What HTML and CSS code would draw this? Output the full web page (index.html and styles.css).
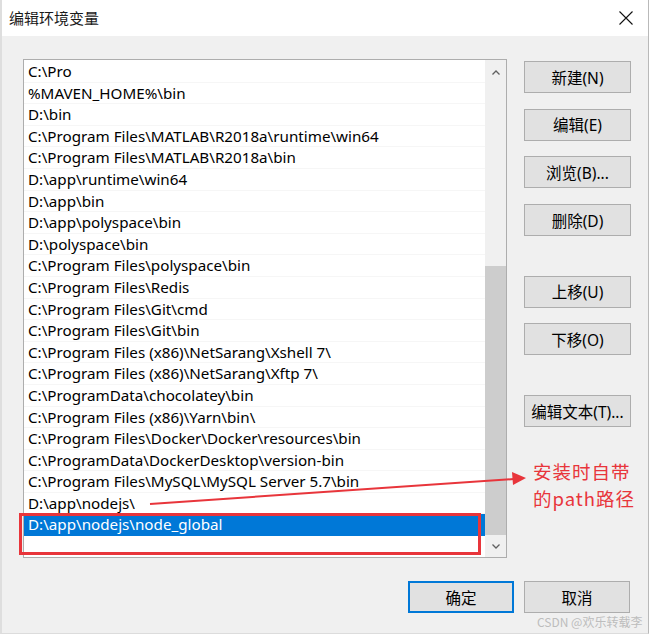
FILE: index.html
```html
<!DOCTYPE html>
<html lang="zh-CN">
<head>
<meta charset="utf-8">
<title>编辑环境变量</title>
<link rel="stylesheet" href="styles.css">
</head>
<body>
<div class="window">
  <div class="titlebar">
    <span class="title">编辑环境变量</span>
    <svg class="close" width="14" height="14" viewBox="0 0 14 14"><path d="M0.5 0.5 L13.5 13.5 M13.5 0.5 L0.5 13.5" stroke="#111" stroke-width="1.1" fill="none"/></svg>
  </div>
  <div class="content">
    <div class="main">
      <div class="listbox">
        <ul class="list">
          <li>C:\Pro</li>
          <li>%MAVEN_HOME%\bin</li>
          <li>D:\bin</li>
          <li>C:\Program Files\MATLAB\R2018a\runtime\win64</li>
          <li>C:\Program Files\MATLAB\R2018a\bin</li>
          <li>D:\app\runtime\win64</li>
          <li>D:\app\bin</li>
          <li>D:\app\polyspace\bin</li>
          <li>D:\polyspace\bin</li>
          <li>C:\Program Files\polyspace\bin</li>
          <li>C:\Program Files\Redis</li>
          <li>C:\Program Files\Git\cmd</li>
          <li>C:\Program Files\Git\bin</li>
          <li>C:\Program Files (x86)\NetSarang\Xshell 7\</li>
          <li>C:\Program Files (x86)\NetSarang\Xftp 7\</li>
          <li>C:\ProgramData\chocolatey\bin</li>
          <li>C:\Program Files (x86)\Yarn\bin\</li>
          <li>C:\Program Files\Docker\Docker\resources\bin</li>
          <li>C:\ProgramData\DockerDesktop\version-bin</li>
          <li>C:\Program Files\MySQL\MySQL Server 5.7\bin</li>
          <li>D:\app\nodejs\</li>
          <li class="selected"><span>D:\app\nodejs\node_global</span></li>
          <li class="empty"></li>
        </ul>
        <div class="scrollbar">
          <div class="arrow">
            <svg width="8" height="5" viewBox="0 0 8 5"><path d="M0.5 4.5 L4 1 L7.5 4.5" stroke="#606060" stroke-width="1.3" fill="none"/></svg>
          </div>
          <div class="track"><div class="thumb"></div></div>
          <div class="arrow bottom">
            <svg width="8" height="5" viewBox="0 0 8 5"><path d="M0.5 0.5 L4 4 L7.5 0.5" stroke="#606060" stroke-width="1.3" fill="none"/></svg>
          </div>
        </div>
      </div>
      <div class="side">
        <button class="btn">新建(N)</button>
        <button class="btn">编辑(E)</button>
        <button class="btn">浏览(B)...</button>
        <button class="btn">删除(D)</button>
        <button class="btn spaced">上移(U)</button>
        <button class="btn">下移(O)</button>
        <button class="btn spaced">编辑文本(T)...</button>
      </div>
    </div>
    <div class="footer">
      <button class="btn default">确定</button>
      <button class="btn">取消</button>
    </div>
  </div>
  <svg class="annotation" width="650" height="635" viewBox="0 0 650 635">
    <rect x="20.5" y="514.5" width="459" height="39" fill="none" stroke="#e8353b" stroke-width="3"/>
    <path d="M150 504 L514 479" stroke="#e8353b" stroke-width="2" fill="none"/>
    <path d="M526 478 L512 472 L513 485 Z" fill="#e8353b"/>
  </svg>
  <div class="note"><div>安装时自带</div><div>的path路径</div></div>
  <div class="watermark">CSDN @欢乐转载李</div>
</div>
</body>
</html>
```
FILE: styles.css
```css
html, body {
  margin: 0;
  padding: 0;
  background: #ffffff;
}
body {
  width: 650px;
  height: 635px;
  overflow: hidden;
  font-family: "Noto Sans", "Noto Sans CJK SC", sans-serif;
  color: #000;
}
.window {
  position: relative;
  width: 646px;
  height: 633px;
  border-left: 2px solid #dedede;
  border-right: 1px solid #b9b9b9;
  border-bottom: 1px solid #dcdcdc;
  background: #f0f0f0;
  display: flex;
  flex-direction: column;
}
.titlebar {
  height: 36px;
  background: #ffffff;
  display: flex;
  align-items: center;
  justify-content: space-between;
  padding: 0 15px 0 7px;
  flex: none;
}
.title {
  font-family: "Noto Sans CJK SC", sans-serif;
  font-size: 15px;
  color: #1a1a1a;
  margin-top: -1px;
}
.close {
  display: block;
  margin-top: -1px;
}
.content {
  flex: 1;
  display: flex;
  flex-direction: column;
  padding: 23px 0 0 21px;
}
.main {
  display: flex;
  gap: 17px;
}
.listbox {
  width: 484px;
  height: 499px;
  box-sizing: border-box;
  border: 1px solid #adadad;
  background: #ffffff;
  display: flex;
}
.list {
  list-style: none;
  margin: 0;
  padding: 1px 0 0 0;
  flex: 1;
  overflow: hidden;
}
.list li {
  height: 21.6px;
  line-height: 21.6px;
  box-sizing: border-box;
  padding-left: 4px;
  font-size: 15.2px;
  white-space: nowrap;
  color: #000;
  border-bottom: 1px solid #f6f6f6;
}
.list li.selected {
  background: #0078d7;
  color: #ffffff;
  border-bottom: none;
}
.list li.empty {
  border-bottom: none;
}
.scrollbar {
  width: 21px;
  background: #f0f0f0;
  display: flex;
  flex-direction: column;
  flex: none;
}
.arrow {
  height: 25px;
  display: flex;
  align-items: center;
  justify-content: center;
  flex: none;
}
.arrow.bottom {
  height: 22px;
}
.track {
  flex: 1;
  display: flex;
  flex-direction: column;
  justify-content: flex-end;
}
.thumb {
  height: 269px;
  background: #cdcdcd;
}
.side {
  display: flex;
  flex-direction: column;
  gap: 15.7px;
  padding-top: 2px;
}
.btn {
  width: 107px;
  height: 32px;
  box-sizing: border-box;
  border: 1px solid #adadad;
  background: #e1e1e1;
  font-family: "Noto Sans", "Noto Sans CJK SC", sans-serif;
  font-size: 15.5px;
  color: #000;
  padding: 0;
  margin: 0;
}
.btn.spaced {
  margin-top: 24px;
}
.footer {
  display: flex;
  justify-content: flex-end;
  gap: 10px;
  margin-top: 23px;
  padding-right: 18px;
}
.footer .btn {
  width: 106px;
}
.btn.default {
  border: 2px solid #0078d7;
}
.annotation {
  position: absolute;
  left: -2px;
  top: 0;
  pointer-events: none;
}
.note {
  position: absolute;
  left: 531px;
  top: 458px;
  font-family: "Noto Sans CJK SC", sans-serif;
  font-size: 18.5px;
  letter-spacing: 1px;
  line-height: 27px;
  color: #e8353b;
  white-space: nowrap;
}
.watermark {
  position: absolute;
  left: 535px;
  top: 613px;
  font-family: "Noto Sans CJK SC", sans-serif;
  font-size: 12px;
  color: #bdbdbd;
  white-space: nowrap;
}
```
